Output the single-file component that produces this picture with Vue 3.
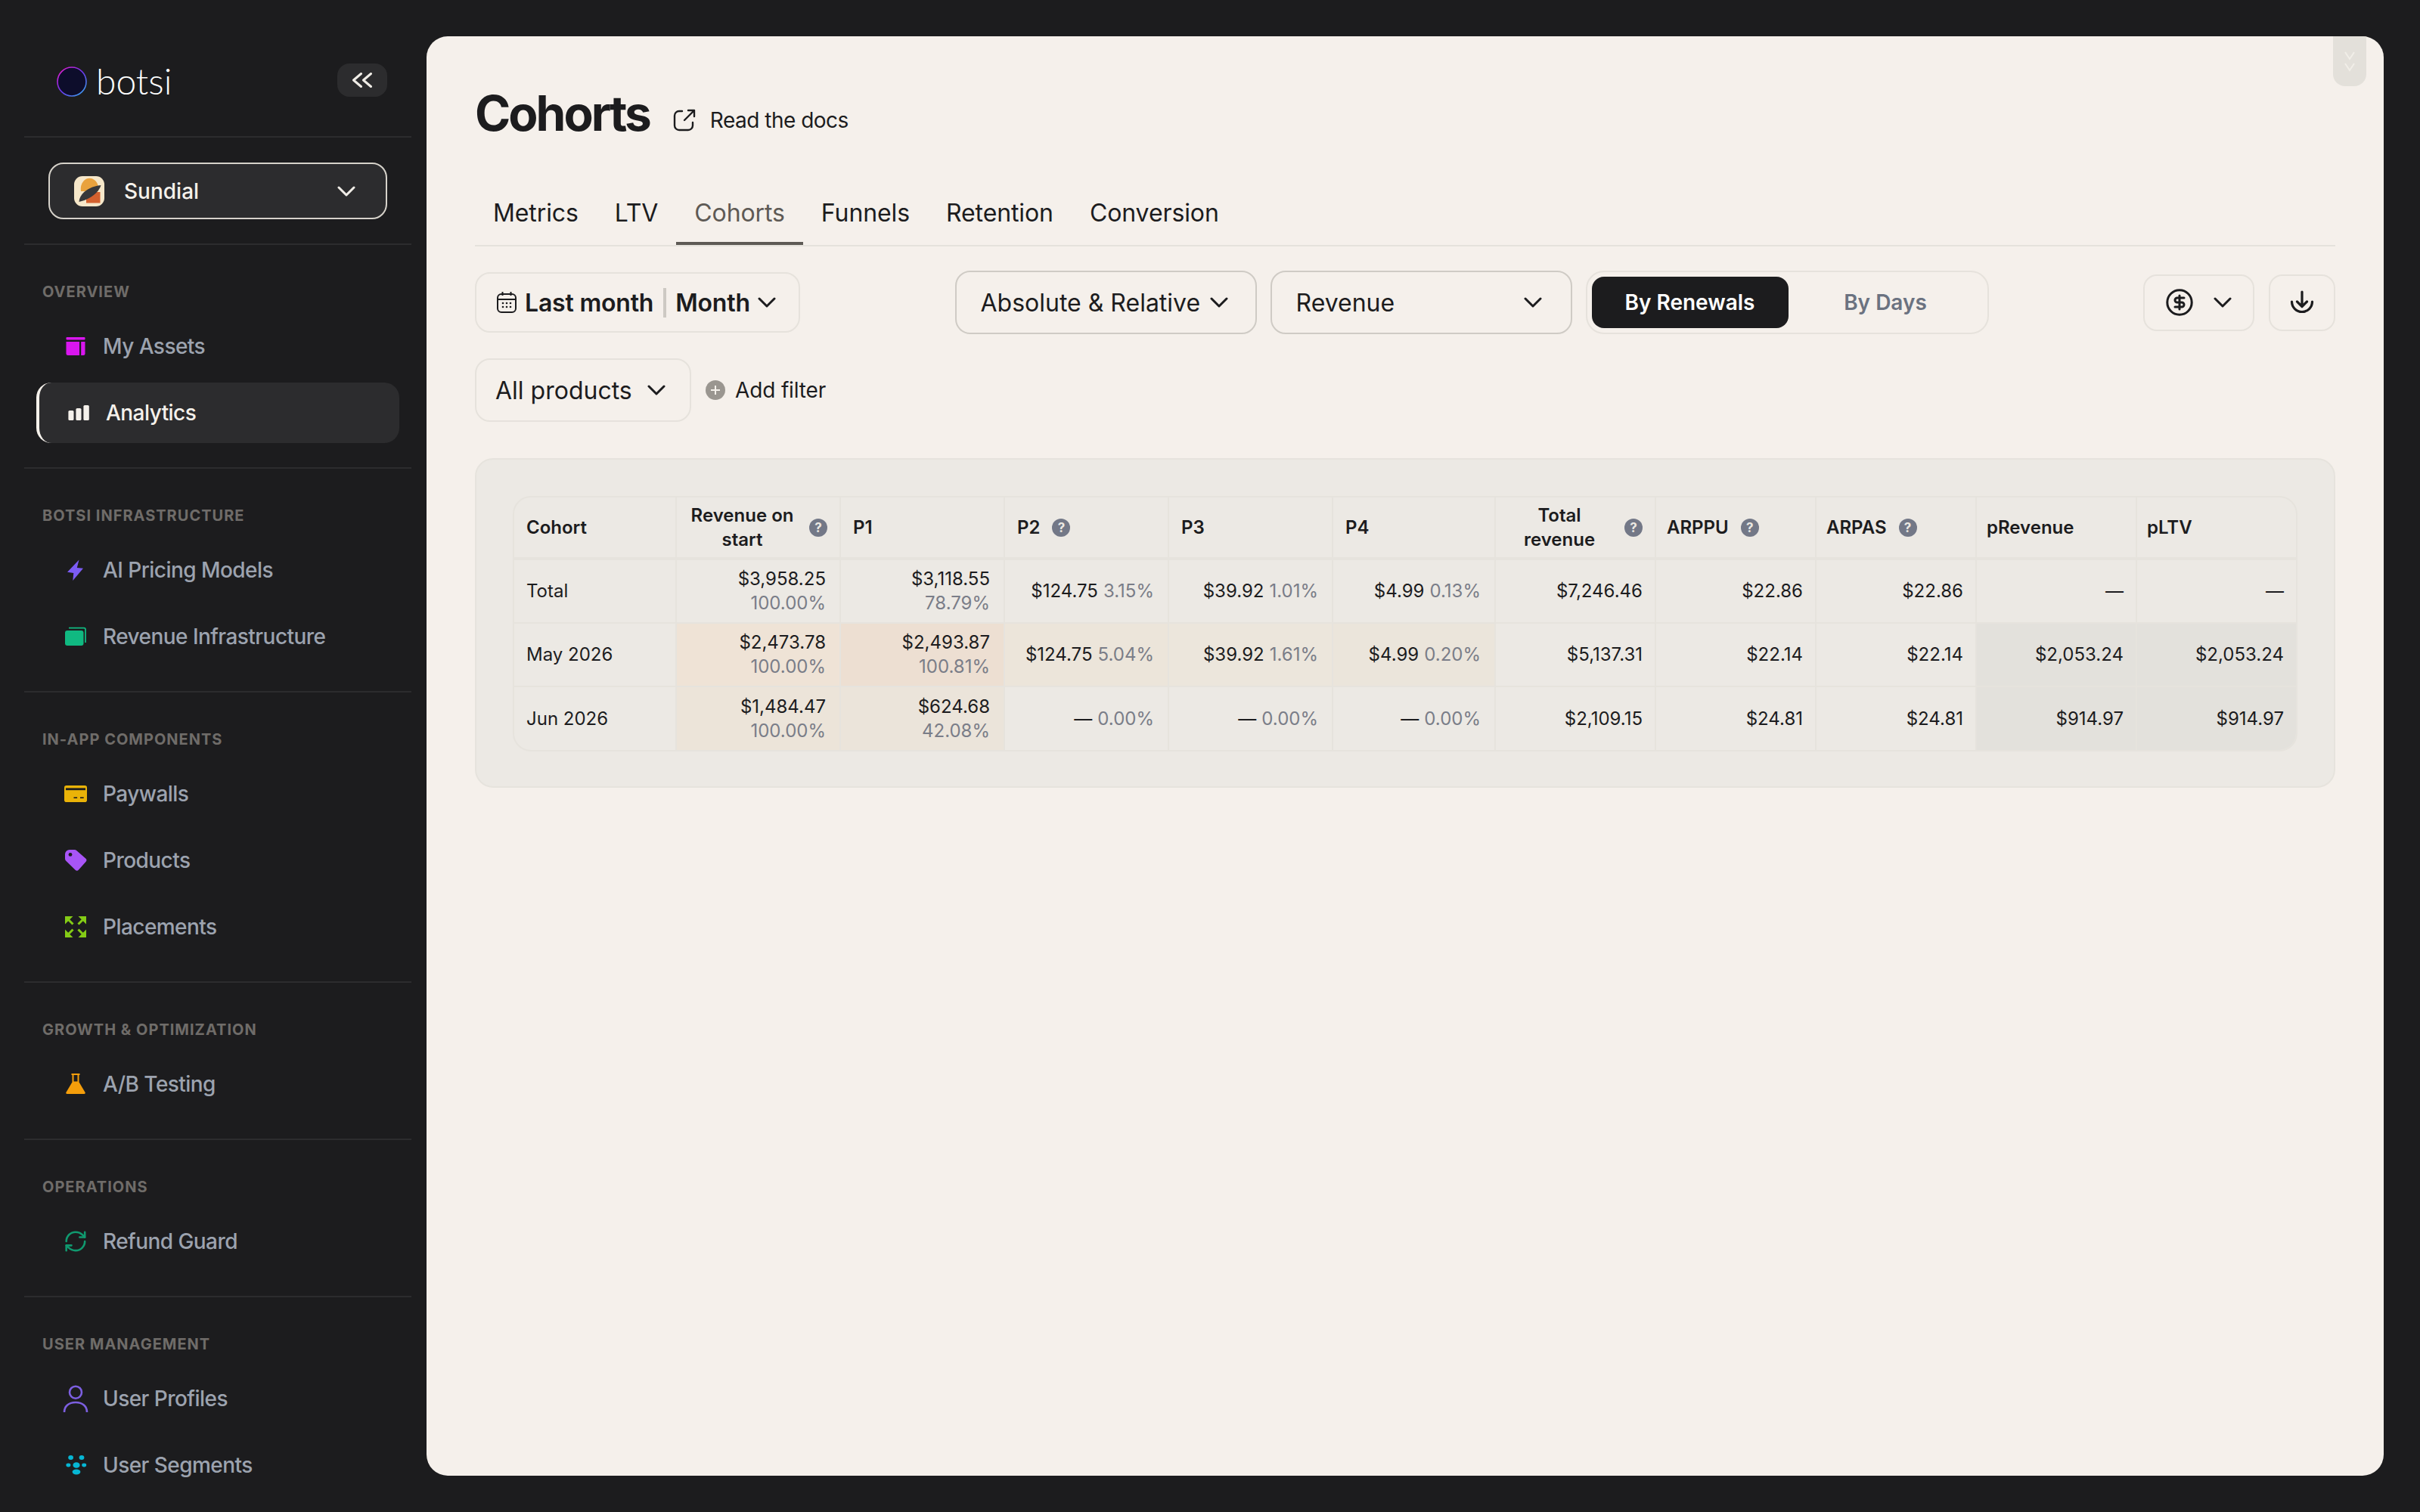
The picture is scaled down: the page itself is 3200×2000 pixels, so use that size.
<script setup>
const icons = {
  assets: '<rect x="7.5" y="8" width="25" height="3.6" rx="1" fill="#d916ef"/><path d="M7.5 14h17.5v18h-15a2.5 2.5 0 0 1-2.5-2.5z" fill="#d916ef"/><path d="M27.2 14h5.3v15.5a2.5 2.5 0 0 1-2.5 2.5h-2.8z" fill="#d916ef"/>',
  analytics: '<rect x="6.4" y="17" width="7.1" height="13" rx="1.6" fill="#f5f1eb"/><rect x="16.4" y="14" width="7.1" height="16" rx="1.6" fill="#f5f1eb"/><rect x="26.4" y="10" width="7.4" height="20" rx="1.6" fill="#f5f1eb"/>',
  bolt: '<path d="M24.5 6.5 9 22.8l8.3 1.2-1 10L30 17.8l-8.2-.8z" fill="#7c5cf5"/>',
  stack: '<path d="M11 8.6h20a2 2 0 0 1 2 2V28" fill="none" stroke="#10b981" stroke-width="1.8"/><rect x="6" y="12" width="24.5" height="20" rx="3" fill="#10b981"/>',
  card: '<rect x="5" y="9" width="30" height="22" rx="2.8" fill="#eab308"/><rect x="7" y="12.4" width="26" height="2.8" fill="#1c1c1e"/><rect x="17.5" y="24.4" width="4.6" height="1.6" fill="#1c1c1e"/><rect x="26" y="24.4" width="4.7" height="1.6" fill="#1c1c1e"/>',
  tag: '<path d="M12 6h6.5a4 4 0 0 1 2.7 1l12 10.5a3 3 0 0 1 .2 4.4l-9.4 10.6a3 3 0 0 1-4.4.2L7.3 20.7a4 4 0 0 1-1.3-3V12a6 6 0 0 1 6-6z" fill="#a855f7"/><circle cx="13" cy="12.4" r="2.4" fill="#1c1c1e"/>',
  expand: '<g fill="#84cc16" stroke="#84cc16"><path d="M6 6h10.5L6 16.5z" stroke="none"/><path d="M8 8l8.5 8.5" stroke-width="3"/><g transform="rotate(90 20 20)"><path d="M6 6h10.5L6 16.5z" stroke="none"/><path d="M8 8l8.5 8.5" stroke-width="3"/></g><g transform="rotate(180 20 20)"><path d="M6 6h10.5L6 16.5z" stroke="none"/><path d="M8 8l8.5 8.5" stroke-width="3"/></g><g transform="rotate(270 20 20)"><path d="M6 6h10.5L6 16.5z" stroke="none"/><path d="M8 8l8.5 8.5" stroke-width="3"/></g></g>',
  flask: '<path d="M14.5 7h11M16.5 7v10M23.5 7v10" fill="none" stroke="#f59e0b" stroke-width="2"/><path d="M16 16.5h8l8.6 14.4a1.4 1.4 0 0 1-1.2 2.1H8.6a1.4 1.4 0 0 1-1.2-2.1z" fill="#f59e0b"/>',
  sync: '<g transform="translate(3.6 3.6) scale(1.36)" fill="none" stroke="#10996f" stroke-width="1.9" stroke-linecap="round" stroke-linejoin="round"><path d="M3 12a9 9 0 0 1 9-9 9.75 9.75 0 0 1 6.74 2.74L21 8"/><path d="M21 3v5h-5"/><path d="M21 12a9 9 0 0 1-9 9 9.75 9.75 0 0 1-6.74-2.74L3 16"/><path d="M8 16H3v5"/></g>',
  user: '<circle cx="20" cy="11.7" r="8" fill="none" stroke="#7c5fe0" stroke-width="2.6"/><path d="M5 38c0-8 6-13 15-13s15 5 15 13" fill="none" stroke="#7c5fe0" stroke-width="2.6"/>',
  dots: '<g fill="#06b6d4"><ellipse cx="13.6" cy="10" rx="3.4" ry="3"/><ellipse cx="28" cy="10" rx="3.4" ry="3"/><ellipse cx="10.4" cy="20" rx="3" ry="2.4"/><ellipse cx="21" cy="20" rx="4.6" ry="3.8"/><ellipse cx="31.2" cy="20" rx="3" ry="2.4"/><ellipse cx="21" cy="29" rx="5.4" ry="3.4"/></g>'
}

const groups = [
  { title: 'OVERVIEW', items: [
    { label: 'My Assets', icon: 'assets' },
    { label: 'Analytics', icon: 'analytics', active: true }
  ] },
  { title: 'BOTSI INFRASTRUCTURE', items: [
    { label: 'AI Pricing Models', icon: 'bolt' },
    { label: 'Revenue Infrastructure', icon: 'stack' }
  ] },
  { title: 'IN-APP COMPONENTS', items: [
    { label: 'Paywalls', icon: 'card' },
    { label: 'Products', icon: 'tag' },
    { label: 'Placements', icon: 'expand' }
  ] },
  { title: 'GROWTH & OPTIMIZATION', items: [{ label: 'A/B Testing', icon: 'flask' }] },
  { title: 'OPERATIONS', items: [{ label: 'Refund Guard', icon: 'sync' }] },
  { title: 'USER MANAGEMENT', items: [
    { label: 'User Profiles', icon: 'user' },
    { label: 'User Segments', icon: 'dots' }
  ] }
]

const tabs = ['Metrics', 'LTV', 'Cohorts', 'Funnels', 'Retention', 'Conversion']

const columns = [
  { label: 'Cohort' },
  { label: 'Revenue on start', help: true, wrap: true },
  { label: 'P1' },
  { label: 'P2', help: true },
  { label: 'P3' },
  { label: 'P4' },
  { label: 'Total revenue', help: true, wrap: true },
  { label: 'ARPPU', help: true },
  { label: 'ARPAS', help: true },
  { label: 'pRevenue' },
  { label: 'pLTV' }
]

const rows = [
  { label: 'Total', cells: [
    { v: '$3,958.25', p: '100.00%', stack: true },
    { v: '$3,118.55', p: '78.79%', stack: true },
    { v: '$124.75', p: '3.15%' },
    { v: '$39.92', p: '1.01%' },
    { v: '$4.99', p: '0.13%' },
    { v: '$7,246.46' }, { v: '$22.86' }, { v: '$22.86' }, { v: '—' }, { v: '—' }
  ] },
  { label: 'May 2026', cells: [
    { v: '$2,473.78', p: '100.00%', stack: true, bg: '#efe3d6' },
    { v: '$2,493.87', p: '100.81%', stack: true, bg: '#eddfd2' },
    { v: '$124.75', p: '5.04%', bg: '#ece5da' },
    { v: '$39.92', p: '1.61%', bg: '#ece6dc' },
    { v: '$4.99', p: '0.20%', bg: '#ebe5db' },
    { v: '$5,137.31' }, { v: '$22.14' }, { v: '$22.14' },
    { v: '$2,053.24', bg: '#e3e1dc' }, { v: '$2,053.24', bg: '#e3e1dc' }
  ] },
  { label: 'Jun 2026', cells: [
    { v: '$1,484.47', p: '100.00%', stack: true, bg: '#ece4d9' },
    { v: '$624.68', p: '42.08%', stack: true, bg: '#ebe4da' },
    { v: '—', p: '0.00%' },
    { v: '—', p: '0.00%' },
    { v: '—', p: '0.00%' },
    { v: '$2,109.15' }, { v: '$24.81' }, { v: '$24.81' },
    { v: '$914.97', bg: '#e3e1dc' }, { v: '$914.97', bg: '#e3e1dc' }
  ] }
]
</script>

<template>
  <div class="app">
    <aside class="sidebar">
      <div class="brand">
        <svg class="logo-mark" viewBox="0 0 40 40" aria-hidden="true">
          <defs>
            <linearGradient id="logoRing" x1="0.1" y1="0.05" x2="0.9" y2="0.95">
              <stop offset="0" stop-color="#e01fd0" />
              <stop offset="0.5" stop-color="#6a35e8" />
              <stop offset="1" stop-color="#3aa0f0" />
            </linearGradient>
          </defs>
          <circle cx="20" cy="20" r="19" fill="#0d0d2b" stroke="url(#logoRing)" stroke-width="1.6" />
        </svg>
        <span class="logo-text">botsi</span>
        <button class="collapse" type="button" aria-label="Collapse">
          <svg viewBox="0 0 28 20" width="28" height="20" fill="none" stroke="#f0ede7" stroke-width="3" stroke-linecap="round" stroke-linejoin="round">
            <path d="M12.5 1.5 2.5 10l10 8.5" /><path d="M25.5 1.5 15.5 10l10 8.5" />
          </svg>
        </button>
      </div>

      <div class="app-select-wrap">
        <div class="app-select">
          <svg class="app-icon" viewBox="0 0 40 40" aria-hidden="true">
            <rect width="40" height="40" rx="11" fill="#f6e7c9" />
            <path d="M9 20a11.5 14 0 0 1 23-6v6z" fill="#e9a23d" />
            <path d="M16 35.5V28a8 8 0 0 1 8-7h10.5v14.5z" fill="#d4612e" />
            <path d="M6.5 34c.5-10 11-20 29-22-3 10-15 19-29 22z" fill="#38383a" />
          </svg>
          <span class="app-name">Sundial</span>
          <svg class="chev" viewBox="0 0 24 14" fill="none" stroke="#f0ede7" stroke-width="3" stroke-linecap="round" stroke-linejoin="round"><path d="M2 2l10 10L22 2" /></svg>
        </div>
      </div>

      <nav>
        <section v-for="g in groups" :key="g.title" class="nav-group">
          <h3 class="nav-title">{{ g.title }}</h3>
          <ul class="nav-list">
            <li v-for="it in g.items" :key="it.label" class="nav-item" :class="{ active: it.active }">
              <svg class="nav-icon" viewBox="0 0 40 40" aria-hidden="true" v-html="icons[it.icon]"></svg>
              <span>{{ it.label }}</span>
            </li>
          </ul>
        </section>
      </nav>
    </aside>

    <main class="card">
      <div class="scroll-tab" aria-hidden="true">
        <svg viewBox="0 0 14 30" width="14" height="30" fill="none" stroke="#f1eee8" stroke-width="2"><path d="M1 1l6 9 6-9" /><path d="M1 16l6 9 6-9" /></svg>
      </div>

      <header class="title-row">
        <h1>Cohorts</h1>
        <a class="docs">
          <svg viewBox="0 0 30 30" width="30" height="30" fill="none" stroke="#1c1c1e" stroke-width="2.4" stroke-linecap="round" stroke-linejoin="round">
            <path d="M12 3H8a6 6 0 0 0-6 6v13a6 6 0 0 0 6 6h12a6 6 0 0 0 6-6v-4" />
            <path d="M15 15 28 2M20 2h8v8" />
          </svg>
          <span>Read the docs</span>
        </a>
      </header>

      <div class="tabs">
        <div v-for="t in tabs" :key="t" class="tab" :class="{ on: t === 'Cohorts' }">{{ t }}</div>
      </div>

      <div class="filters">
        <div class="date-pill">
          <svg class="cal" viewBox="0 0 28 30" width="28" height="30" fill="none" stroke="#1c1c1e" stroke-width="2">
            <rect x="2" y="4" width="24" height="24" rx="5" />
            <path d="M2 11h24M8.5 1v5M19.5 1v5" />
            <g fill="#1c1c1e" stroke="none">
              <circle cx="9" cy="16" r="1.3" /><circle cx="14" cy="16" r="1.3" /><circle cx="19" cy="16" r="1.3" />
              <circle cx="9" cy="21" r="1.3" /><circle cx="14" cy="21" r="1.3" /><circle cx="19" cy="21" r="1.3" />
            </g>
          </svg>
          <b>Last month</b>
          <i class="sep"></i>
          <b>Month</b>
          <svg class="chev dark" viewBox="0 0 24 14" fill="none" stroke="#1c1c1e" stroke-width="3" stroke-linecap="round" stroke-linejoin="round"><path d="M2 2l10 10L22 2" /></svg>
        </div>

        <div class="mid">
          <div class="select abs">
            <span>Absolute &amp; Relative</span>
            <svg class="chev" viewBox="0 0 24 14" fill="none" stroke="#1c1c1e" stroke-width="3" stroke-linecap="round" stroke-linejoin="round"><path d="M2 2l10 10L22 2" /></svg>
          </div>
          <div class="select rev">
            <span>Revenue</span>
            <svg class="chev" viewBox="0 0 24 14" fill="none" stroke="#1c1c1e" stroke-width="3" stroke-linecap="round" stroke-linejoin="round"><path d="M2 2l10 10L22 2" /></svg>
          </div>
          <div class="segment">
            <span class="seg on">By Renewals</span>
            <span class="seg">By Days</span>
          </div>
        </div>

        <div class="right">
          <div class="square currency">
            <svg viewBox="0 0 24 24" width="36" height="36" fill="none" stroke="#1c1c1e" stroke-width="2" stroke-linecap="round" stroke-linejoin="round">
              <circle cx="12" cy="12" r="10.8" />
              <path d="M16 8h-6a2 2 0 1 0 0 4h4a2 2 0 1 1 0 4H8" /><path d="M12 18V6" />
            </svg>
            <svg class="chev" viewBox="0 0 24 14" fill="none" stroke="#1c1c1e" stroke-width="3" stroke-linecap="round" stroke-linejoin="round"><path d="M2 2l10 10L22 2" /></svg>
          </div>
          <div class="square download">
            <svg viewBox="0 0 32 32" width="32" height="32" fill="none" stroke="#1c1c1e" stroke-width="3.2" stroke-linecap="round" stroke-linejoin="round">
              <path d="M16 2v19M9.5 15l6.5 6.5 6.5-6.5" />
              <path d="M2.5 15a13.5 13.5 0 0 0 27 0" />
            </svg>
          </div>
        </div>
      </div>

      <div class="filters-two">
        <div class="select products">
          <span>All products</span>
          <svg class="chev" viewBox="0 0 24 14" fill="none" stroke="#1c1c1e" stroke-width="3" stroke-linecap="round" stroke-linejoin="round"><path d="M2 2l10 10L22 2" /></svg>
        </div>
        <div class="add-filter">
          <span class="plus"><svg viewBox="0 0 14 14" width="14" height="14" stroke="#f5f1eb" stroke-width="2"><path d="M7 1v12M1 7h12" /></svg></span>
          <span>Add filter</span>
        </div>
      </div>

      <div class="panel">
        <div class="table">
          <div v-for="c in columns" :key="c.label" class="cell head">
            <span class="head-label" :class="{ wrap: c.wrap }">{{ c.label }}</span>
            <span v-if="c.help" class="help">?</span>
          </div>
          <template v-for="r in rows" :key="r.label">
            <div class="cell label">{{ r.label }}</div>
            <div v-for="(c, i) in r.cells" :key="i" class="cell num" :class="{ stack: c.stack, early: i < 5 }" :style="{ background: c.bg }">
              <span>{{ c.v }}</span>
              <span v-if="c.p" class="pct">{{ c.p }}</span>
            </div>
          </template>
        </div>
      </div>
    </main>
  </div>
</template>

<style>
html, body { margin: 0; background: #1c1c1e; }
</style>

<style scoped>
* { box-sizing: border-box; }
.app {
  width: 3200px;
  height: 2000px;
  display: flex;
  overflow: hidden;
  background: #1c1c1e;
  font-family: Inter, "Liberation Sans", sans-serif;
  color: #1c1c1e;
}

/* Sidebar */
.sidebar { width: 564px; flex: none; padding: 0 20px 0 32px; }
.brand {
  height: 182px;
  padding: 36px 32px 0 43px;
  border-bottom: 2px solid #2c2c2e;
  display: flex;
  align-items: center;
}
.logo-mark { width: 40px; height: 40px; flex: none; overflow: visible; }
.logo-text {
  margin-left: 12px;
  margin-top: -2px;
  font-family: Lato, sans-serif;
  font-weight: 300;
  font-size: 48px;
  line-height: 48px;
  color: #fff;
}
.collapse {
  margin-left: auto;
  width: 66px;
  height: 44px;
  margin-top: -4px;
  border: 0;
  padding: 0;
  border-radius: 16px;
  background: #2c2c2e;
  display: flex;
  align-items: center;
  justify-content: center;
}
.app-select-wrap {
  height: 142px;
  border-bottom: 2px solid #2c2c2e;
  padding: 33px 32px 0;
}
.app-select {
  height: 75px;
  border: 2px solid #d6d2ca;
  border-radius: 20px;
  background: #2c2c2e;
  display: flex;
  align-items: center;
  padding: 0 40px 0 32px;
  font-size: 28px;
  font-weight: 500;
  color: #f5f1eb;
}
.app-icon { width: 40px; height: 40px; flex: none; }
.app-name { margin-left: 26px; }
.chev { width: 24px; height: 14px; flex: none; margin-left: auto; }

.nav-group { padding: 50px 0 32px; border-bottom: 2px solid #2c2c2e; }
.nav-group:last-child { border-bottom: 0; }
.nav-title {
  margin: 0 0 20px;
  padding-left: 24px;
  font-size: 20px;
  line-height: 24px;
  font-weight: 700;
  letter-spacing: 1px;
  color: #6f6c69;
}
.nav-list {
  list-style: none;
  margin: 0;
  padding: 0 16px;
  display: flex;
  flex-direction: column;
  gap: 8px;
}
.nav-item {
  height: 80px;
  display: flex;
  align-items: center;
  gap: 16px;
  padding-left: 32px;
  font-size: 28px;
  font-weight: 500;
  letter-spacing: -0.55px;
  color: #9ca3af;
  border-radius: 20px;
}
.nav-item.active {
  background: #2c2c2e;
  border-left: 4px solid #f5f1eb;
  color: #f5f1eb;
}
.nav-icon { width: 40px; height: 40px; flex: none; overflow: visible; }

/* Main */
.card {
  position: relative;
  width: 2588px;
  height: 1904px;
  margin-top: 48px;
  padding: 64px 64px 0;
  background: #f5f0eb;
  border-radius: 28px;
  overflow: hidden;
}
.scroll-tab {
  position: absolute;
  top: 0;
  right: 23px;
  width: 44px;
  height: 66px;
  background: #e3e0da;
  border-radius: 0 0 16px 16px;
  display: flex;
  justify-content: center;
  padding-top: 20px;
}
.title-row { height: 76px; margin-bottom: 50px; display: flex; align-items: center; }
h1 {
  margin: 0;
  font-size: 64px;
  line-height: 76px;
  font-weight: 700;
  letter-spacing: -3px;
  color: #1c1c1e;
}
.docs {
  margin-left: 31px;
  margin-top: 18px;
  display: flex;
  align-items: center;
  gap: 19px;
  font-size: 28px;
  font-weight: 400;
  letter-spacing: -0.5px;
}
.tabs { display: flex; height: 88px; border-bottom: 2px solid #e5e2dc; }
.tab {
  height: 86px;
  padding: 4px 24px 0;
  border-bottom: 4px solid transparent;
  display: flex;
  align-items: center;
  font-size: 32px;
  font-weight: 400;
  letter-spacing: -0.1px;
  color: #1c1c1e;
}
.tab.on { color: #5e5a55; border-bottom-color: #5e5a55; }

.filters {
  margin-top: 32px;
  height: 84px;
  display: flex;
  align-items: center;
  justify-content: space-between;
}
.date-pill {
  width: 430px;
  height: 80px;
  border: 2px solid #e6e2dc;
  border-radius: 20px;
  display: flex;
  align-items: center;
  padding: 0 32px 0 26px;
  font-size: 32px;
  white-space: nowrap;
}
.date-pill b { font-weight: 600; letter-spacing: -0.2px; }
.cal { margin-right: 10px; flex: none; }
.sep { width: 4px; height: 39px; background: #cdc9c3; margin: 0 12px 0 13px; flex: none; }
.date-pill .chev { margin-left: 10px; }
.mid { display: flex; gap: 18px; }
.select {
  height: 84px;
  border: 2px solid #cfcbc5;
  border-radius: 20px;
  display: flex;
  align-items: center;
  font-size: 32px;
  font-weight: 400;
  white-space: nowrap;
}
.abs { width: 399px; padding: 0 36px 0 32px; }
.rev { width: 399px; padding: 0 38px 0 32px; }
.segment {
  width: 533px;
  height: 84px;
  border: 2px solid #e6e2dc;
  border-radius: 24px;
  padding: 6px;
  display: flex;
}
.seg {
  flex: 1;
  display: flex;
  align-items: center;
  justify-content: center;
  font-size: 28px;
  font-weight: 600;
  color: #6b7280;
  border-radius: 16px;
}
.seg.on { flex: none; width: 260px; background: #1c1c1e; color: #fff; }
.right { display: flex; gap: 19px; }
.square {
  height: 75px;
  border: 2px solid #e6e2dc;
  border-radius: 18px;
  display: flex;
  align-items: center;
  justify-content: center;
}
.currency { width: 147px; padding: 0 28px; }
.download { width: 88px; }

.filters-two { margin-top: 32px; height: 84px; display: flex; align-items: center; }
.products {
  width: 286px;
  border-color: #e6e2dc;
  padding: 0 32px 0 25px;
}
.add-filter {
  margin-left: 19px;
  display: flex;
  align-items: center;
  gap: 13px;
  font-size: 28px;
  letter-spacing: -0.15px;
}
.plus {
  width: 26px;
  height: 26px;
  border-radius: 50%;
  background: #9a9690;
  display: flex;
  align-items: center;
  justify-content: center;
}

.panel {
  margin-top: 48px;
  height: 436px;
  background: #ece9e4;
  border: 2px solid #e6e3dd;
  border-radius: 24px;
  padding: 48px;
}
.table {
  display: grid;
  grid-template-columns: 215px 217px 217px 217px 217px 215px 212px 212px 212px 212px 210px;
  grid-template-rows: 83px 84px 84px 83px;
  border: 2px solid #e6e3dd;
  border-radius: 24px;
  overflow: hidden;
  font-size: 24px;
}
.cell {
  border-right: 2px solid #e6e3dd;
  border-bottom: 2px solid #e6e3dd;
  padding: 0 16px;
  display: flex;
  align-items: center;
  line-height: 32px;
}
.cell:nth-child(11n) { border-right: 0; }
.cell:nth-last-child(-n + 11) { border-bottom: 0; }
.head { border-bottom-width: 4px; font-weight: 600; gap: 16px; }
.head:nth-child(2) { padding-left: 14px; }
.head:nth-child(n + 7) { padding-left: 14px; }
.head:nth-child(n + 9) { padding-left: 13px; }
.head-label.wrap { flex: 1; text-align: center; }
.help {
  width: 24px;
  height: 24px;
  flex: none;
  border-radius: 50%;
  background: #737887;
  color: #ebe8e2;
  font-size: 17px;
  font-weight: 700;
  line-height: 24px;
  text-align: center;
}
.num { justify-content: flex-end; gap: 7px; white-space: nowrap; }
.num.early { padding-right: 18px; }
.num.stack { flex-direction: column; align-items: flex-end; justify-content: center; gap: 0; }
.pct { color: #7a7d88; }
</style>
